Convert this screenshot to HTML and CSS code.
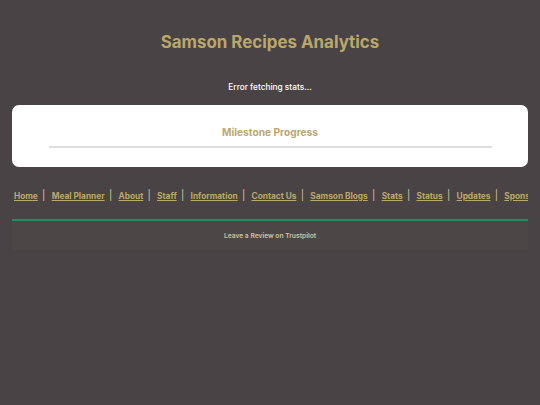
FILE: index.html
```html
<!DOCTYPE html>
<html>
<head>
<meta charset="utf-8">
<link rel="stylesheet" href="styles.css">
</head>
<body>
<header class="header">
  <h1 class="title">Samson Recipes Analytics</h1>
</header>
<p class="status">Error fetching stats...</p>
<section class="card">
  <h2 class="card-title">Milestone Progress</h2>
  <div class="progress"></div>
</section>
<nav class="nav">
  <a href="#">Home</a><span class="sep">|</span>
  <a href="#">Meal Planner</a><span class="sep">|</span>
  <a href="#">About</a><span class="sep">|</span>
  <a href="#">Staff</a><span class="sep">|</span>
  <a href="#">Information</a><span class="sep">|</span>
  <a href="#">Contact Us</a><span class="sep">|</span>
  <a href="#">Samson Blogs</a><span class="sep">|</span>
  <a href="#">Stats</a><span class="sep">|</span>
  <a href="#">Status</a><span class="sep">|</span>
  <a href="#">Updates</a><span class="sep">|</span>
  <a href="#">Sponsors</a>
</nav>
<footer class="footer">
  <p class="footer-text">Leave a Review on <a href="#">Trustpilot</a></p>
</footer>
</body>
</html>
```
FILE: styles.css
```css
html, body {
  margin: 0;
  padding: 0;
}
body {
  background: #494345;
  font-family: Inter, "Noto Sans", sans-serif;
  width: 540px;
  height: 405px;
  overflow: hidden;
}
.header {
  padding-top: 31px;
  display: flex;
  justify-content: center;
}
.title {
  margin: 0;
  font-size: 16.9px;
  font-weight: 700;
  color: #b9a76c;
  line-height: 22px;
}
.status {
  margin: 28px 0 0;
  text-align: center;
  font-size: 8.3px;
  font-weight: 500;
  color: #ffffff;
  line-height: 12px;
}
.card {
  margin: 12px 12px 0;
  background: #ffffff;
  border-radius: 7px;
  height: 62px;
  display: flex;
  flex-direction: column;
  align-items: center;
  padding-top: 21px;
  box-sizing: border-box;
}
.card-title {
  margin: 0;
  font-size: 10.2px;
  font-weight: 700;
  color: #bca86d;
  line-height: 12px;
}
.progress {
  margin-top: 8px;
  width: 443px;
  height: 2px;
  background: #dedede;
}
.nav {
  margin: 22px 12px 0 14px;
  white-space: nowrap;
  overflow: hidden;
  font-size: 8.3px;
  font-weight: 700;
  line-height: 12px;
  color: #bca86d;
}
.nav a {
  color: #bca86d;
  text-decoration: underline;
}
.sep {
  display: inline-block;
  margin: 0 4.3px;
  font-size: 10px;
  font-weight: 400;
  color: #d6c89a;
}
.footer {
  margin: 17px 12px 0;
  border-top: 2px solid #1f8f62;
  background: #4c4646;
  height: 31px;
  display: flex;
  justify-content: center;
  padding-top: 10px;
  box-sizing: border-box;
}
.footer-text {
  margin: 0;
  font-size: 6.7px;
  font-weight: 600;
  color: #cfc3a0;
  line-height: 10px;
}
.footer-text a {
  color: #cfc3a0;
  text-decoration: none;
}
```
